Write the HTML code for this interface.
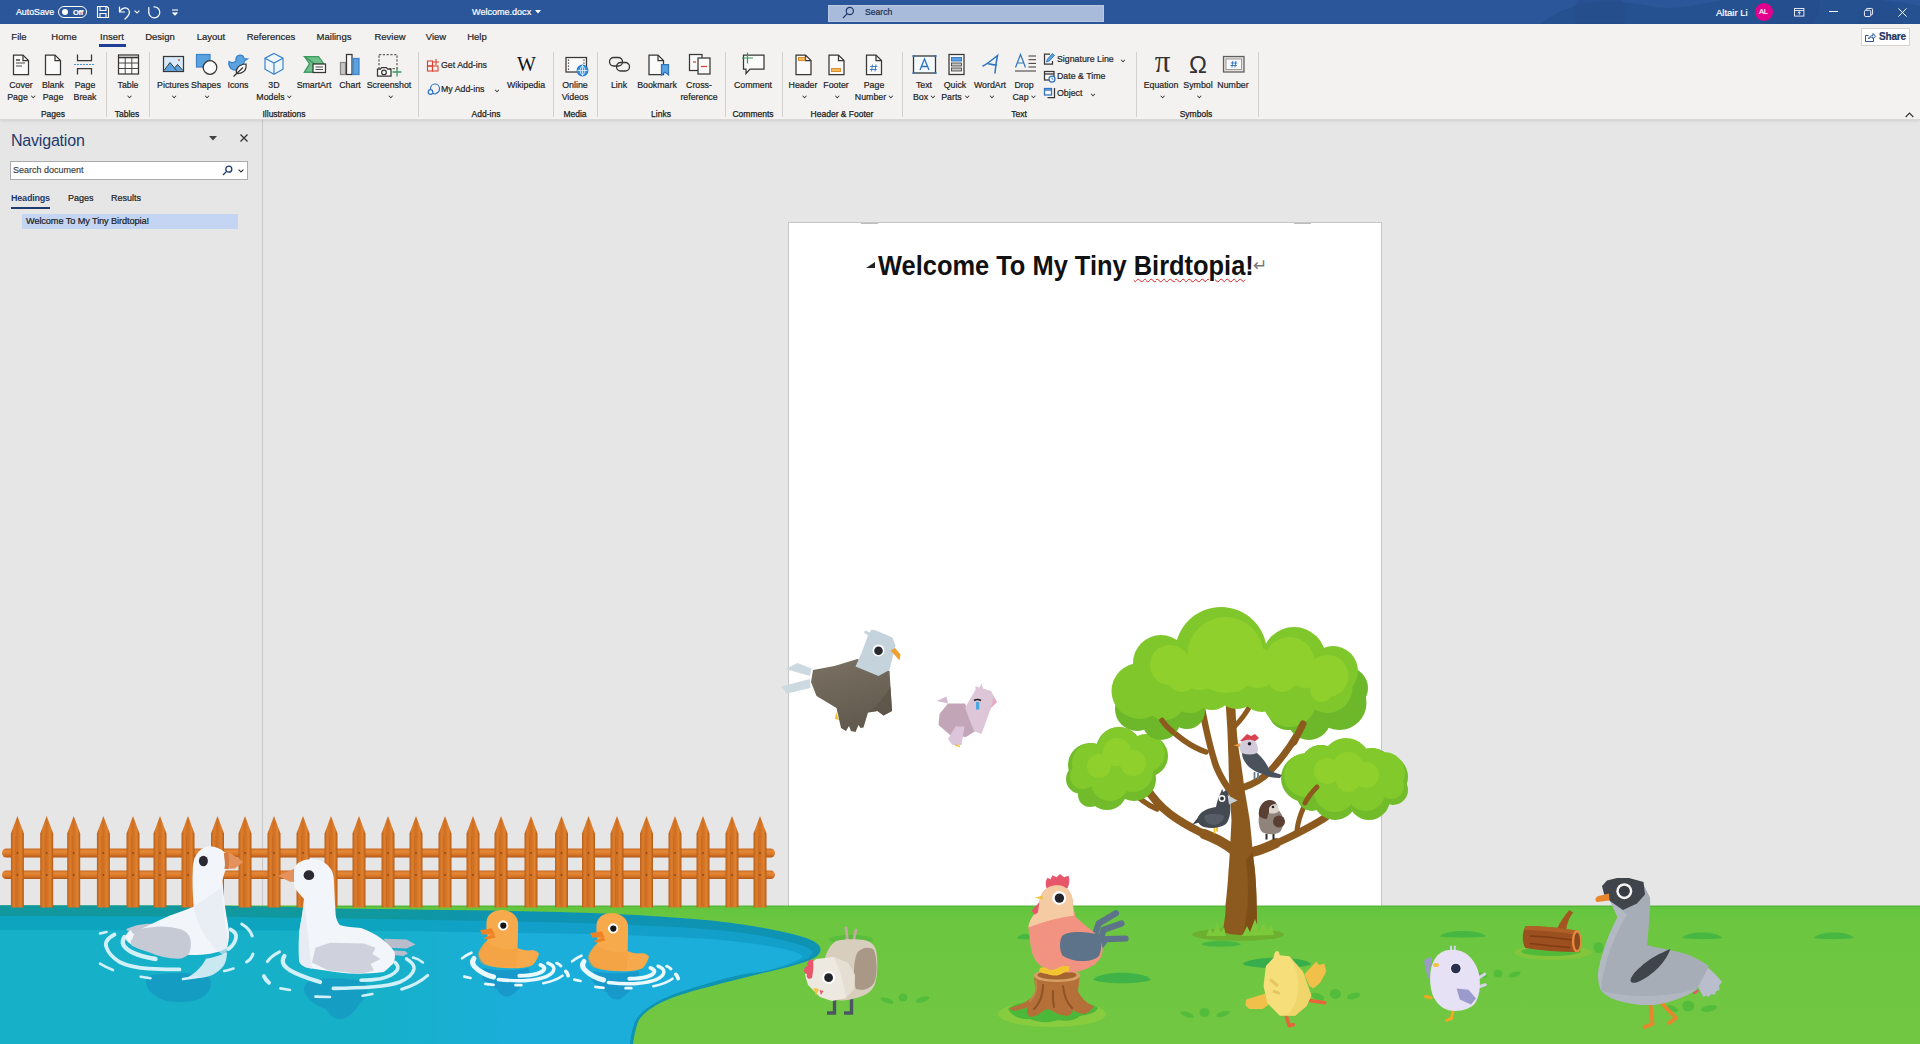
<!DOCTYPE html>
<html lang="en">
<head>
<meta charset="utf-8">
<title>Welcome.docx - Word</title>
<style>
*{margin:0;padding:0;box-sizing:border-box}
html,body{width:1920px;height:1044px;overflow:hidden;background:#e6e6e6}
body{font-family:"Liberation Sans",sans-serif;font-size:11px;color:#262626;position:relative}
#app{position:absolute;left:0;top:0;width:1920px;height:1044px;overflow:hidden;background:#e6e6e6}
.abs{position:absolute}
#titlebar{position:absolute;left:0;top:0;width:1920px;height:24px;background:#2b579a;color:#fff}
#titlebar .t{position:absolute;top:6px;font-size:11px;line-height:13px;color:#fff;white-space:nowrap;-webkit-text-stroke:.2px currentColor}
#ribbon{position:absolute;left:0;top:24px;width:1920px;height:96px;background:#f3f2f1;border-bottom:1px solid #dad8d6;box-shadow:0 1px 3px rgba(0,0,0,.10);z-index:2}
.tab{position:absolute;top:6px;font-size:9.5px;line-height:14px;color:#1f1f1f;-webkit-text-stroke:.2px #1f1f1f;white-space:nowrap;transform:translateX(-50%)}
.rb{position:absolute;top:55px;font-size:8.8px;line-height:12.3px;color:#1f1f1f;-webkit-text-stroke:.2px #1f1f1f;text-align:center;white-space:nowrap;transform:translateX(-50%)}
.gl{position:absolute;top:84px;font-size:8.5px;line-height:12px;color:#222;-webkit-text-stroke:.25px #222;white-space:nowrap;transform:translateX(-50%)}
.sep{position:absolute;top:28px;width:1px;height:65px;background:#d2d0ce}
.sm{position:absolute;font-size:8.8px;line-height:13px;color:#1f1f1f;-webkit-text-stroke:.2px #1f1f1f;white-space:nowrap}
.ic{position:absolute;overflow:visible}
.chev{display:inline-block;width:4px;height:4px;border-right:1.3px solid #2b2b2b;border-bottom:1.3px solid #2b2b2b;transform:rotate(45deg) scale(.8);position:relative;top:-2px;margin-left:3px}
#nav{position:absolute;left:0;top:120px;width:262.500px;height:923px;background:#e6e6e6;border-right:1px solid #c8c8c8}
#page{position:absolute;left:788px;top:222px;width:594px;height:822px;background:#fff;border:1px solid #c6c6c6;border-bottom:none}
</style>
</head>
<body>
<div id="app">
<div id="titlebar">
  <svg class="ic" style="left:1540px;top:0" width="380" height="24" viewBox="0 0 380 24">
    <path d="M0 24 C30 2 60 -4 110 6 C150 14 175 -6 230 -2 C290 2 330 -6 380 6 L380 24Z" fill="#264f8e" opacity=".75"/>
    <circle cx="60" cy="14" r="26" fill="#244b88" opacity=".45"/>
    <circle cx="250" cy="4" r="30" fill="#244b88" opacity=".4"/>
    <circle cx="340" cy="22" r="22" fill="#244b88" opacity=".4"/>
  </svg>
  <span class="t" style="left:16px;font-size:8.8px;">AutoSave</span>
  <div class="abs" style="left:58px;top:6px;width:29px;height:12px;border:1.3px solid #fff;border-radius:7px"></div>
  <div class="abs" style="left:62px;top:9px;width:6px;height:6px;border-radius:50%;background:#fff"></div>
  <span class="t" style="left:73px;top:6.500px;font-size:7.5px;font-weight:bold;line-height:11px;letter-spacing:-.3px">Off</span>
  <!-- save -->
  <svg class="ic" style="left:96px;top:5px" width="14" height="14" viewBox="0 0 14 14" fill="none" stroke="#fff" stroke-width="1.1">
    <path d="M1.5 1.5h9.5l1.5 1.5v9.500h-11z"/><path d="M4 1.500v4h6v-4"/><path d="M4 12.500v-4h6v4"/>
  </svg>
  <!-- undo -->
  <svg class="ic" style="left:117px;top:4px" width="16" height="16" viewBox="0 0 16 16" fill="none" stroke="#fff" stroke-width="1.2" stroke-linecap="round" stroke-linejoin="round">
    <path d="M2.500 3v5h5"/><path d="M2.800 7.600C4.500 4 9 2.500 11.500 5.500c2 2.600.5 6-3.500 9.500"/>
  </svg>
  <svg class="ic" style="left:134px;top:10px" width="6" height="4" viewBox="0 0 6 4" fill="none" stroke="#fff" stroke-width="1.1"><path d="M.6.600l2.400 2.400l2.400-2.400"/></svg>
  <!-- redo -->
  <svg class="ic" style="left:146px;top:4px" width="16" height="16" viewBox="0 0 16 16" fill="none" stroke="#fff" stroke-width="1.2" stroke-linecap="round" stroke-linejoin="round">
    <path d="M2.800 3.500v5"/><path d="M2.800 8.500A5.500 5.500 0 1 0 8 2.800"/>
  </svg>
  <svg class="ic" style="left:171px;top:9px" width="8" height="7" viewBox="0 0 8 7" fill="none" stroke="#fff" stroke-width="1.1"><path d="M1 1h6"/><path d="M1.600 3.500l2.400 2.400l2.400-2.400" fill="#fff"/></svg>
  <span class="t" style="left:472px;font-size:9.05px">Welcome.docx</span>
  <svg class="ic" style="left:535px;top:10px" width="6" height="4" viewBox="0 0 6 4"><path d="M0 0h6l-3 3.500z" fill="#fff"/></svg>
  <div class="abs" style="left:828px;top:4.500px;width:276px;height:17px;background:#a8bbda;border:1px solid #b9c8e2"></div>
  <svg class="ic" style="left:842px;top:6px" width="13" height="13" viewBox="0 0 13 13" fill="none" stroke="#1f3a68" stroke-width="1.2"><circle cx="7.800" cy="5" r="3.600"/><path d="M5.200 7.600L1 12"/></svg>
  <span class="t" style="left:865px;color:#1c2f52;font-size:8.6px">Search</span>
  <span class="t" style="left:1716px;font-size:9.5px">Altair Li</span>
  <div class="abs" style="left:1755px;top:3px;width:18px;height:18px;border-radius:50%;background:#e3008c"></div>
  <span class="t" style="left:1759px;top:7px;font-size:7.500px;line-height:10px;letter-spacing:-.2px">AL</span>
  <svg class="ic" style="left:1794px;top:8px" width="10.500" height="8.500" viewBox="0 0 12 10" fill="none" stroke="#fff" stroke-width="1"><rect x=".5" y=".5" width="11" height="9"/><path d="M.500 3h11"/><path d="M6 8V4.500M4.300 6L6 4.300L7.700 6"/></svg>
  <div class="abs" style="left:1829px;top:11px;width:9px;height:1px;background:#fff"></div>
  <svg class="ic" style="left:1863.500px;top:7.500px" width="9" height="9" viewBox="0 0 10 10" fill="none" stroke="#fff" stroke-width="1"><rect x=".5" y="2.500" width="7" height="7" rx="1.500"/><path d="M2.500 2.500v-1a1 1 0 0 1 1-1h5a1 1 0 0 1 1 1v5a1 1 0 0 1-1 1h-1"/></svg>
  <svg class="ic" style="left:1897.500px;top:7.500px" width="9" height="9" viewBox="0 0 10 10" fill="none" stroke="#fff" stroke-width="1.1"><path d="M.5.500l9 9M9.500.500l-9 9"/></svg>
</div>
<div id="ribbon">
  <span class="tab" style="left:19px">File</span>
  <span class="tab" style="left:64px">Home</span>
  <span class="tab" style="left:112px">Insert</span>
  <span class="tab" style="left:160px">Design</span>
  <span class="tab" style="left:211px">Layout</span>
  <span class="tab" style="left:271px">References</span>
  <span class="tab" style="left:334px">Mailings</span>
  <span class="tab" style="left:390px">Review</span>
  <span class="tab" style="left:436px">View</span>
  <span class="tab" style="left:477px">Help</span>
  <div class="abs" style="left:99px;top:20px;width:27px;height:2.500px;background:#1f3f94"></div>
  <span class="rb" style="left:21px">Cover<br>Page<i class="chev"></i></span>
  <span class="rb" style="left:53px">Blank<br>Page</span>
  <span class="rb" style="left:85px">Page<br>Break</span>
  <span class="rb" style="left:128px">Table<br><i class="chev"></i></span>
  <span class="rb" style="left:173px">Pictures<br><i class="chev"></i></span>
  <span class="rb" style="left:206px">Shapes<br><i class="chev"></i></span>
  <span class="rb" style="left:238px">Icons</span>
  <span class="rb" style="left:274px">3D<br>Models<i class="chev"></i></span>
  <span class="rb" style="left:314px">SmartArt</span>
  <span class="rb" style="left:350px">Chart</span>
  <span class="rb" style="left:389px">Screenshot<br><i class="chev"></i></span>
  <span class="rb" style="left:526px">Wikipedia</span>
  <span class="rb" style="left:575px">Online<br>Videos</span>
  <span class="rb" style="left:619px">Link</span>
  <span class="rb" style="left:657px">Bookmark</span>
  <span class="rb" style="left:699px">Cross-<br>reference</span>
  <span class="rb" style="left:753px">Comment</span>
  <span class="rb" style="left:803px">Header<br><i class="chev"></i></span>
  <span class="rb" style="left:836px">Footer<br><i class="chev"></i></span>
  <span class="rb" style="left:874px">Page<br>Number<i class="chev"></i></span>
  <span class="rb" style="left:924px">Text<br>Box<i class="chev"></i></span>
  <span class="rb" style="left:955px">Quick<br>Parts<i class="chev"></i></span>
  <span class="rb" style="left:990px">WordArt<br><i class="chev"></i></span>
  <span class="rb" style="left:1024px">Drop<br>Cap<i class="chev"></i></span>
  <span class="rb" style="left:1161px">Equation<br><i class="chev"></i></span>
  <span class="rb" style="left:1198px">Symbol<br><i class="chev"></i></span>
  <span class="rb" style="left:1233px">Number</span>
  <span class="gl" style="left:53px">Pages</span>
  <span class="gl" style="left:127px">Tables</span>
  <span class="gl" style="left:284px">Illustrations</span>
  <span class="gl" style="left:486px">Add-ins</span>
  <span class="gl" style="left:575px">Media</span>
  <span class="gl" style="left:661px">Links</span>
  <span class="gl" style="left:753px">Comments</span>
  <span class="gl" style="left:842px">Header &amp; Footer</span>
  <span class="gl" style="left:1019px">Text</span>
  <span class="gl" style="left:1196px">Symbols</span>
  <div class="sep" style="left:106px"></div>
  <div class="sep" style="left:149px"></div>
  <div class="sep" style="left:418px"></div>
  <div class="sep" style="left:553px"></div>
  <div class="sep" style="left:597px"></div>
  <div class="sep" style="left:725px"></div>
  <div class="sep" style="left:782px"></div>
  <div class="sep" style="left:902px"></div>
  <div class="sep" style="left:1136px"></div>
  <div class="sep" style="left:1258px"></div>
  <span class="sm" style="left:441px;top:35px">Get Add-ins</span>
  <span class="sm" style="left:441px;top:59px">My Add-ins</span>
  <span class="sm" style="left:1057px;top:29px">Signature Line</span>
  <span class="sm" style="left:1057px;top:46px">Date &amp; Time</span>
  <span class="sm" style="left:1057px;top:63px">Object</span>
  <i class="chev" style="position:absolute;left:492px;top:64px"></i>
  <i class="chev" style="position:absolute;left:1118px;top:34px"></i>
  <i class="chev" style="position:absolute;left:1088px;top:68px"></i>
  <!--ICONS-->
  <div class="abs" style="left:1861px;top:4px;width:49px;height:18px;background:#fff;border:1px solid #d6d4d2"></div>
  <svg class="ic" style="left:1865px;top:8px" width="11" height="10" viewBox="0 0 11 10" fill="none" stroke="#2b579a" stroke-width="1"><path d="M3.500 3.500h-3v6h8v-2.500"/><path d="M3.500 7C4 4.500 6 3.500 8 3.500V1.500l2.500 2.700L8 7V5.200C6 5.200 4.500 5.700 3.500 7z"/></svg>
  <span class="sm" style="left:1879px;top:6px;font-size:10px;font-weight:bold;color:#1e3a6e;letter-spacing:-.2px">Share</span>
  <svg class="ic" style="left:1905px;top:88px" width="9" height="6" viewBox="0 0 9 6" fill="none" stroke="#333" stroke-width="1.200"><path d="M.7 5l3.800-3.800L8.300 5"/></svg>
</div>
<svg class="ic" style="left:0;top:0;z-index:3" width="1920" height="121" viewBox="0 0 1920 121" fill="none" stroke-linejoin="miter">
<g stroke="#383736" stroke-width="1.25">
  <!-- cover page -->
  <path d="M13.500 55h9.500l5.500 5.500v14h-15z" fill="#fafafa"/><path d="M23 55v5.500h5.500"/>
  <path d="M16 60h4" stroke-width="1.400"/><path d="M16 63h9M16 66h6" stroke-width=".9"/>
  <!-- blank page -->
  <path d="M45.500 55h9.500l5.500 5.500v14h-15z" fill="#fafafa"/><path d="M55 55v5.500h5.500"/>
  <!-- page break -->
  <path d="M77.500 54.500v6h14v-6M77.500 74.500v-6h14v6" />
  <path d="M74 64.500h21" stroke="#4a90d6" stroke-dasharray="2 1" stroke-width="1.200"/>
  <!-- table -->
  <rect x="118.500" y="55" width="20" height="19" fill="#fafafa"/><path d="M118.500 57.500h20" stroke-width="1.600"/>
  <path d="M118.500 63h20M118.500 68.500h20M125.200 57.500v16.500M131.800 57.500v16.500" stroke-width=".9"/>
  <!-- pictures -->
  <rect x="163.500" y="56.500" width="20" height="15" fill="#d9ebfa"/>
  <path d="M164 71l6-8.500l4.500 5l3-3l5.500 6.500z" fill="#5ba3e0" stroke="none"/>
  <path d="M164 70.500l6-8l6.500 8M175 67.500l2.500-3l5.500 6" stroke-width="1"/>
  <circle cx="179" cy="60" r="1.100" fill="#c8683c" stroke="none"/>
  <!-- shapes -->
  <rect x="196.500" y="54.500" width="13.500" height="12.500" fill="#5ba3e0" stroke="#3c83c8"/>
  <circle cx="210" cy="67.500" r="6.800" fill="#fafafa"/>
  <!-- icons (duck + leaf) -->
  <path d="M229 61.500c2.500 1.500 5 1.500 7-.5c-.5-3 1-6 4-6c2.500 0 3.800 1.500 4 3.500l3.500.5l-3 2c-.5 3-2 5-4.500 6.500c-2 3-6.500 3.500-9 1c-1.800-2-2.500-4.500-2-7z" fill="#5ba3e0" stroke="#3c83c8"/>
  <path d="M236.500 73.500c-1-5 2-9 9.500-9.500c.8 6-2.500 10-9.500 9.500z" fill="#fafafa"/><path d="M233.500 76.500l9.500-9"/>
  <!-- 3D -->
  <path d="M274 53.500l9 4.700v11l-9 5l-9-5v-11z" fill="#eef6fd" stroke="#3c83c8" stroke-width="1.200"/>
  <path d="M265 58.200l9 4.800l9-4.800M274 63v11" stroke="#3c83c8" stroke-width="1.200"/>
  <!-- smartart -->
  <path d="M304.500 56.500h14l5.500 7.500h-9.500zM304.500 72l5-8h5v8z" fill="#6cc08a" stroke="#3d9a5f"/>
  <path d="M304.500 56.500l5 7.500l-5 8h10l-0-8z" fill="#6cc08a" stroke="#3d9a5f"/>
  <rect x="313" y="64" width="12.500" height="8.500" fill="#fafafa"/><path d="M315.500 67h7.500M315.500 69.500h7.500" stroke-width=".9"/>
  <!-- chart -->
  <rect x="340.500" y="62.500" width="5" height="12" fill="#c8c6c4" stroke="#8a8886"/>
  <rect x="346.500" y="54.500" width="5.500" height="20" fill="#fafafa"/>
  <rect x="353" y="58.500" width="6" height="16" fill="#5ba3e0" stroke="#3c83c8"/>
  <!-- screenshot -->
  <rect x="379" y="54.500" width="18" height="14" stroke-dasharray="2.200 1.600" stroke="#605e5c"/>
  <path d="M377.500 69h3l1-1.500h5l1 1.500h3.500v7h-13.500z" fill="#fafafa"/><circle cx="384" cy="72.400" r="2.300"/>
  <path d="M397 67.500v9M392.500 72h9" stroke="#3d9a5f" stroke-width="1.300"/>
  <!-- get add-ins -->
  <g stroke="#d8432e" stroke-width="1.100"><rect x="427.500" y="61" width="5" height="5"/><rect x="427.500" y="66" width="5" height="5"/><rect x="432.500" y="66" width="5.500" height="5"/><path d="M436 59v6M433 62h6"/></g>
  <!-- my add-ins -->
  <g stroke="#2f74c0" stroke-width="1.200"><path d="M430.500 89c0-3 2-5 4.500-5s4.500 2 4.500 4.500s-1.500 4.500-4 5" /><circle cx="430.500" cy="92" r="2.300"/><path d="M433 93.700l3 .300"/></g>
  <!-- online video -->
  <rect x="566" y="57.500" width="20.500" height="14.500" fill="#fafafa"/>
  <path d="M568.500 59.500v11M584 59.500v6" stroke-dasharray="1.200 1.800" stroke-width="1.200"/>
  <circle cx="582.500" cy="70.500" r="5.300" fill="#3a96dd" stroke="#2b7cd3"/>
  <path d="M577.500 70.500h10M582.500 65.500v10M582.500 65.500c-3 3-3 7 0 10M582.500 65.500c3 3 3 7 0 10" stroke="#fff" stroke-width=".7"/>
  <!-- link -->
  <g stroke-width="1.300"><rect x="609.500" y="57.500" width="13" height="8.500" rx="4.250"/><rect x="616.500" y="62.500" width="13" height="8.500" rx="4.250"/></g>
  <!-- bookmark -->
  <path d="M649 55h9l5.500 5.500v14h-14.500z" fill="#fafafa"/><path d="M658 55v5.500h5.500"/>
  <path d="M661.500 64.500h7v10.500l-3.500-3l-3.500 3z" fill="#5ba3e0" stroke="#2f74c0"/>
  <!-- cross ref -->
  <rect x="689.500" y="54.500" width="12.500" height="16" fill="#fafafa"/><path d="M693 62h3" stroke="#d8432e"/>
  <rect x="698" y="58" width="12" height="16" fill="#fafafa"/><path d="M701 66.500h6" stroke="#d8432e"/>
  <!-- comment -->
  <path d="M743.500 55h20.500v14h-14l-4 4.500v-4.500h-2.500z" fill="#fafafa"/>
  <path d="M747.500 52.500v11M742 58h11" stroke="#3d9a5f" stroke-width="1.200"/>
  <!-- header -->
  <path d="M796 55h9.500l5.500 5.500v14h-15z" fill="#fafafa"/><path d="M805.500 55v5.500h5.500"/>
  <rect x="798.500" y="57.500" width="6.500" height="3" fill="#f5b85c" stroke="#d98b1f" stroke-width=".9"/>
  <!-- footer -->
  <path d="M829 55h9.500l5.500 5.500v14h-15z" fill="#fafafa"/><path d="M838.500 55v5.500h5.500"/>
  <rect x="831.500" y="68.500" width="9" height="3" fill="#f5b85c" stroke="#d98b1f" stroke-width=".9"/>
  <!-- page number -->
  <path d="M866.500 55h9.500l5.500 5.500v14h-15z" fill="#fafafa"/><path d="M876 55v5.500h5.500"/>
  <path d="M872.500 64.500l-1 7M876 64.500l-1 7M870.300 66.500h7M869.800 69.500h7" stroke="#2f74c0" stroke-width=".9"/>
  <!-- text box -->
  <rect x="913.500" y="56" width="22" height="17" fill="#f4f9fe" stroke-width="1.300"/>
  <path d="M920 70l4.500-11l4.500 11M921.500 66.500h6" stroke="#2f74c0" stroke-width="1.300"/>
  <g fill="#2f74c0" stroke="none"><rect x="912.500" y="55" width="2" height="2"/><rect x="934.500" y="55" width="2" height="2"/><rect x="912.500" y="72" width="2" height="2"/><rect x="934.500" y="72" width="2" height="2"/></g>
  <!-- quick parts -->
  <rect x="949" y="54.500" width="15" height="20" fill="#fafafa"/>
  <rect x="951.500" y="57.500" width="10" height="3.500" fill="#5ba3e0" stroke="#2f74c0" stroke-width=".9"/>
  <rect x="951.500" y="63" width="10" height="3" fill="#c8c6c4" stroke-width=".8"/><rect x="951.500" y="68" width="10" height="3" fill="#c8c6c4" stroke-width=".8"/>
  <!-- wordart -->
  <path d="M983 66c4-2 9-6 14.500-10.500c-1 5-2 11-2.500 17.500M987.500 63.500c3 .8 6 1.500 9 1.500" stroke="#2f74c0" stroke-width="1.500" stroke-linecap="round"/>
  <!-- drop cap -->
  <path d="M1015.500 67.500l5-13l5 13M1017.300 63h6.500" stroke="#2f74c0" stroke-width="1.200"/>
  <path d="M1028.500 56h7.500M1028.500 59.700h7.500M1028.500 63.400h7.500M1028.500 67h7.500M1015 71h21" stroke-width="1"/>
  <!-- signature -->
  <path d="M1050 54h-5.500v10h8v-3" /><path d="M1046.500 62l1-3l5-5.500l2 1.800l-5 5.500z" fill="#5ba3e0" stroke="#2f74c0" stroke-width=".9"/>
  <!-- date time -->
  <rect x="1044.500" y="71.500" width="9.500" height="8.500" fill="#fafafa"/><path d="M1044.500 74h9.500" stroke-width="1.300"/>
  <circle cx="1052" cy="79" r="3" fill="#fafafa" stroke="#2f74c0"/><path d="M1052 77.500v1.700h1.300" stroke="#2f74c0" stroke-width=".8"/>
  <!-- object -->
  <path d="M1047.500 97.500h7v-9.500" /><rect x="1044.500" y="88.500" width="7" height="6.500" fill="#fafafa" stroke="#2f74c0"/><path d="M1044.500 90h7" stroke="#2f74c0" stroke-width="1.400"/>
  <!-- number -->
  <rect x="1223.500" y="56.500" width="20.500" height="15.500" fill="#e1dfdd" stroke="#605e5c"/><rect x="1226" y="59" width="15.500" height="10.500" fill="#fafafa" stroke="#8a8886" stroke-width=".8"/>
  <path d="M1232.800 61l-.8 6.500M1235.800 61l-.8 6.500M1230.800 63h6.500M1230.400 65.500h6.500" stroke="#2f74c0" stroke-width=".9"/>
</g>
<text x="526.500" y="70.500" font-family="Liberation Serif,serif" font-size="20" fill="#111" text-anchor="middle">W</text>
<text x="1162.500" y="72" font-family="Liberation Serif,DejaVu Serif,serif" font-size="31" fill="#333" text-anchor="middle">π</text>
<text x="1198" y="72.500" font-family="Liberation Sans,sans-serif" font-size="24" fill="#333" text-anchor="middle">Ω</text>
</svg>
<div id="nav"><div style="position:absolute;left:0;top:1px;width:261px;height:100px">
  <span class="abs" style="left:11px;top:10px;font-size:16px;line-height:20px;color:#1e3a6e;letter-spacing:-.2px">Navigation</span>
  <svg class="ic" style="left:209px;top:15px" width="8" height="5" viewBox="0 0 8 5"><path d="M0 0h8l-4 4.500z" fill="#444"/></svg>
  <svg class="ic" style="left:240px;top:13px" width="8" height="8" viewBox="0 0 8 8" fill="none" stroke="#333" stroke-width="1.300"><path d="M.500.500l7 7M7.500.500l-7 7"/></svg>
  <div class="abs" style="left:10px;top:40px;width:238px;height:19px;background:#fff;border:1px solid #ababab"></div>
  <span class="abs" style="left:13px;top:44px;font-size:9px;line-height:11px;color:#3a3a3a;-webkit-text-stroke:.15px #3a3a3a">Search document</span>
  <svg class="ic" style="left:222px;top:44px" width="11" height="11" viewBox="0 0 11 11" fill="none" stroke="#1e3a6e" stroke-width="1.300"><circle cx="6.800" cy="4.200" r="3"/><path d="M4.600 6.400L1 10"/></svg>
  <svg class="ic" style="left:238px;top:48px" width="6" height="4" viewBox="0 0 6 4" fill="none" stroke="#333" stroke-width="1.100"><path d="M.600.600l2.400 2.400l2.400-2.400"/></svg>
  <span class="abs" style="left:11px;top:71px;font-size:9px;line-height:12px;font-weight:bold;color:#1e3a6e;letter-spacing:-.2px">Headings</span>
  <div class="abs" style="left:11px;top:86px;width:39px;height:2px;background:#1e3a6e"></div>
  <span class="abs" style="left:68px;top:71px;font-size:9px;line-height:12px;color:#222;-webkit-text-stroke:.2px #222">Pages</span>
  <span class="abs" style="left:111px;top:71px;font-size:9px;line-height:12px;color:#222;-webkit-text-stroke:.2px #222">Results</span>
  <div class="abs" style="left:22px;top:93px;width:216px;height:15px;background:#c3d5f3"></div>
  <span class="abs" style="left:26px;top:95px;font-size:9.2px;line-height:11px;color:#1a1a1a;-webkit-text-stroke:.2px #1a1a1a;letter-spacing:-.1px">Welcome To My Tiny Birdtopia!</span>
</div></div>
<div id="page">
  <div class="abs" style="left:72px;top:0;width:17px;height:1px;background:#bdbdbd"></div>
  <div class="abs" style="left:505px;top:0;width:17px;height:1px;background:#bdbdbd"></div>
  <svg class="ic" style="left:77px;top:38px" width="10" height="8" viewBox="0 0 10 8"><path d="M0 7L9 7L9 1Z" fill="#222"/></svg>
  <h1 id="h1" class="abs" style="left:89px;top:25px;font-size:28px;line-height:36px;font-weight:bold;color:#111;white-space:nowrap;transform-origin:0 50%;transform:scaleX(.908)">Welcome To My Tiny <span style="text-decoration:underline wavy #d22;text-decoration-thickness:1px;text-underline-offset:3px">Birdtopia</span>!</h1>
  <span class="abs" style="left:464px;top:33px;font-size:17px;line-height:18px;color:#777;font-family:'DejaVu Sans',sans-serif">↵</span>
</div>
<svg class="ic" id="scene" style="left:0;top:0" width="1920" height="1044" viewBox="0 0 1920 1044">
<defs>
<linearGradient id="gG" x1="0" y1="0" x2="0" y2="1"><stop offset="0" stop-color="#62c53e"/><stop offset=".12" stop-color="#6cc640"/><stop offset="1" stop-color="#72c742"/></linearGradient>
<linearGradient id="gP" x1="0" y1="0" x2="1" y2="0"><stop offset="0" stop-color="#b9601c"/><stop offset=".22" stop-color="#dc7d2c"/><stop offset=".5" stop-color="#d06f22"/><stop offset=".78" stop-color="#df822f"/><stop offset="1" stop-color="#b55a18"/></linearGradient>
<linearGradient id="gR" x1="0" y1="0" x2="0" y2="1"><stop offset="0" stop-color="#c96a22"/><stop offset=".3" stop-color="#e58a38"/><stop offset=".7" stop-color="#d67426"/><stop offset="1" stop-color="#b05616"/></linearGradient>
<linearGradient id="gW" gradientUnits="userSpaceOnUse" x1="380" y1="0" x2="520" y2="0"><stop offset="0" stop-color="#16b0c9"/><stop offset="1" stop-color="#1baeda"/></linearGradient>
<linearGradient id="gW2" gradientUnits="userSpaceOnUse" x1="380" y1="0" x2="520" y2="0"><stop offset="0" stop-color="#0ca4bf"/><stop offset="1" stop-color="#12a0cb"/></linearGradient>
<linearGradient id="gW3" gradientUnits="userSpaceOnUse" x1="380" y1="0" x2="520" y2="0"><stop offset="0" stop-color="#10989e"/><stop offset="1" stop-color="#0e93b3"/></linearGradient>
</defs>
<rect x="0" y="906" width="1920" height="138" fill="url(#gG)"/>
<rect x="0" y="905.500" width="1920" height="1.500" fill="#58b738"/>
<path d="M0 905.300 L190 905.600 C260 906.200 300 907 337 908.500 C420 909.500 500 910.500 560 912 C630 914 680 917.500 716 921 C745 924.500 765 928 779 931 C795 934.500 807 937.500 813 941 C818.500 944 820.500 946.500 820.500 949.500 C820.500 953.500 817 957 810 960 C797 965.500 778 969.500 763 973 C745 977.500 730 981 716 985 C704 988 694 990.500 685 993.500 C672 997.500 662 1001.500 654 1006.500 C645 1012 640 1017 638 1022 C635.500 1029 634 1037 633 1044 L0 1044 Z" fill="url(#gW3)"/>
<path d="M0 916 L190 916.500 C300 917.500 420 919.500 560 922.500 C630 924.500 680 927 716 930 C745 933 765 936 779 939.500 C793 942.500 802 945 806.500 947.500 C811 949.500 812.500 951 812.500 952.500 C812.500 955 809.500 957.500 804 960 C792 964.500 778 968.500 763 972 C745 973 730 977 716 981 C700 985.500 690 988.500 680 992 C668 996 658 1000.500 650 1006 C641 1012 636 1018 634 1024 C631.500 1031 630.500 1038 630 1044 L0 1044 Z" fill="url(#gW2)"/>
<path d="M0 930 L190 930 C300 930.500 420 931 560 933.500 C630 935 680 937 716 939.500 C745 942.500 765 945 779 948 C789 950 795 951.500 799 953.500 C803 955.500 803.500 957 800 959 C790 964 776 968 763 971.500 C745 973 730 977 716 981 C700 985.500 690 988.500 680 992 C668 996 658 1000.500 650 1006 C641 1012 636 1018 634 1024 C631.500 1031 630.500 1038 630 1044 L0 1044 Z" fill="url(#gW)"/>
<g id="fence">
<rect x="2" y="848.500" width="773" height="9" rx="4.500" fill="url(#gR)"/>
<rect x="2" y="870.500" width="773" height="8.500" rx="4.250" fill="url(#gR)"/>
<path d="M10.9 907.500V833.500L17.4 816L23.9 833.500V907.500Z" fill="url(#gP)"/>
<path d="M15.9 836V906" stroke="#b96020" stroke-width=".8" opacity=".55"/>
<circle cx="17.4" cy="853" r=".9" fill="#8a4412"/><circle cx="17.4" cy="875" r=".9" fill="#8a4412"/>
<path d="M40.2 907.500V833.500L46.7 816L53.2 833.500V907.500Z" fill="url(#gP)"/>
<path d="M45.2 836V906" stroke="#b96020" stroke-width=".8" opacity=".55"/>
<circle cx="46.7" cy="853" r=".9" fill="#8a4412"/><circle cx="46.7" cy="875" r=".9" fill="#8a4412"/>
<path d="M67.2 907.500V833.500L73.7 816L80.2 833.500V907.500Z" fill="url(#gP)"/>
<path d="M72.2 836V906" stroke="#b96020" stroke-width=".8" opacity=".55"/>
<circle cx="73.7" cy="853" r=".9" fill="#8a4412"/><circle cx="73.7" cy="875" r=".9" fill="#8a4412"/>
<path d="M96.9 907.500V833.500L103.4 816L109.9 833.500V907.500Z" fill="url(#gP)"/>
<path d="M101.9 836V906" stroke="#b96020" stroke-width=".8" opacity=".55"/>
<circle cx="103.4" cy="853" r=".9" fill="#8a4412"/><circle cx="103.4" cy="875" r=".9" fill="#8a4412"/>
<path d="M126.5 907.500V833.500L133.0 816L139.5 833.500V907.500Z" fill="url(#gP)"/>
<path d="M131.5 836V906" stroke="#b96020" stroke-width=".8" opacity=".55"/>
<circle cx="133.0" cy="853" r=".9" fill="#8a4412"/><circle cx="133.0" cy="875" r=".9" fill="#8a4412"/>
<path d="M153.5 907.500V833.500L160.0 816L166.5 833.500V907.500Z" fill="url(#gP)"/>
<path d="M158.5 836V906" stroke="#b96020" stroke-width=".8" opacity=".55"/>
<circle cx="160.0" cy="853" r=".9" fill="#8a4412"/><circle cx="160.0" cy="875" r=".9" fill="#8a4412"/>
<path d="M181.5 907.500V833.500L188.0 816L194.5 833.500V907.500Z" fill="url(#gP)"/>
<path d="M186.5 836V906" stroke="#b96020" stroke-width=".8" opacity=".55"/>
<circle cx="188.0" cy="853" r=".9" fill="#8a4412"/><circle cx="188.0" cy="875" r=".9" fill="#8a4412"/>
<path d="M211.0 907.500V833.500L217.5 816L224.0 833.500V907.500Z" fill="url(#gP)"/>
<path d="M216.0 836V906" stroke="#b96020" stroke-width=".8" opacity=".55"/>
<circle cx="217.5" cy="853" r=".9" fill="#8a4412"/><circle cx="217.5" cy="875" r=".9" fill="#8a4412"/>
<path d="M238.5 907.500V833.500L245.0 816L251.5 833.500V907.500Z" fill="url(#gP)"/>
<path d="M243.5 836V906" stroke="#b96020" stroke-width=".8" opacity=".55"/>
<circle cx="245.0" cy="853" r=".9" fill="#8a4412"/><circle cx="245.0" cy="875" r=".9" fill="#8a4412"/>
<path d="M267.5 907.500V833.500L274.0 816L280.5 833.500V907.500Z" fill="url(#gP)"/>
<path d="M272.5 836V906" stroke="#b96020" stroke-width=".8" opacity=".55"/>
<circle cx="274.0" cy="853" r=".9" fill="#8a4412"/><circle cx="274.0" cy="875" r=".9" fill="#8a4412"/>
<path d="M296.5 907.500V833.500L303.0 816L309.5 833.500V907.500Z" fill="url(#gP)"/>
<path d="M301.5 836V906" stroke="#b96020" stroke-width=".8" opacity=".55"/>
<circle cx="303.0" cy="853" r=".9" fill="#8a4412"/><circle cx="303.0" cy="875" r=".9" fill="#8a4412"/>
<path d="M324.5 907.500V833.500L331.0 816L337.5 833.500V907.500Z" fill="url(#gP)"/>
<path d="M329.5 836V906" stroke="#b96020" stroke-width=".8" opacity=".55"/>
<circle cx="331.0" cy="853" r=".9" fill="#8a4412"/><circle cx="331.0" cy="875" r=".9" fill="#8a4412"/>
<path d="M352.5 907.500V833.500L359.0 816L365.5 833.500V907.500Z" fill="url(#gP)"/>
<path d="M357.5 836V906" stroke="#b96020" stroke-width=".8" opacity=".55"/>
<circle cx="359.0" cy="853" r=".9" fill="#8a4412"/><circle cx="359.0" cy="875" r=".9" fill="#8a4412"/>
<path d="M381.5 907.500V833.500L388.0 816L394.5 833.500V907.500Z" fill="url(#gP)"/>
<path d="M386.5 836V906" stroke="#b96020" stroke-width=".8" opacity=".55"/>
<circle cx="388.0" cy="853" r=".9" fill="#8a4412"/><circle cx="388.0" cy="875" r=".9" fill="#8a4412"/>
<path d="M409.5 907.500V833.500L416.0 816L422.5 833.500V907.500Z" fill="url(#gP)"/>
<path d="M414.5 836V906" stroke="#b96020" stroke-width=".8" opacity=".55"/>
<circle cx="416.0" cy="853" r=".9" fill="#8a4412"/><circle cx="416.0" cy="875" r=".9" fill="#8a4412"/>
<path d="M438.5 907.500V833.500L445.0 816L451.5 833.500V907.500Z" fill="url(#gP)"/>
<path d="M443.5 836V906" stroke="#b96020" stroke-width=".8" opacity=".55"/>
<circle cx="445.0" cy="853" r=".9" fill="#8a4412"/><circle cx="445.0" cy="875" r=".9" fill="#8a4412"/>
<path d="M466.5 907.500V833.500L473.0 816L479.5 833.500V907.500Z" fill="url(#gP)"/>
<path d="M471.5 836V906" stroke="#b96020" stroke-width=".8" opacity=".55"/>
<circle cx="473.0" cy="853" r=".9" fill="#8a4412"/><circle cx="473.0" cy="875" r=".9" fill="#8a4412"/>
<path d="M494.5 907.500V833.500L501.0 816L507.5 833.500V907.500Z" fill="url(#gP)"/>
<path d="M499.5 836V906" stroke="#b96020" stroke-width=".8" opacity=".55"/>
<circle cx="501.0" cy="853" r=".9" fill="#8a4412"/><circle cx="501.0" cy="875" r=".9" fill="#8a4412"/>
<path d="M524.5 907.500V833.500L531.0 816L537.5 833.500V907.500Z" fill="url(#gP)"/>
<path d="M529.5 836V906" stroke="#b96020" stroke-width=".8" opacity=".55"/>
<circle cx="531.0" cy="853" r=".9" fill="#8a4412"/><circle cx="531.0" cy="875" r=".9" fill="#8a4412"/>
<path d="M555.0 907.500V833.500L561.5 816L568.0 833.500V907.500Z" fill="url(#gP)"/>
<path d="M560.0 836V906" stroke="#b96020" stroke-width=".8" opacity=".55"/>
<circle cx="561.5" cy="853" r=".9" fill="#8a4412"/><circle cx="561.5" cy="875" r=".9" fill="#8a4412"/>
<path d="M582.0 907.500V833.500L588.5 816L595.0 833.500V907.500Z" fill="url(#gP)"/>
<path d="M587.0 836V906" stroke="#b96020" stroke-width=".8" opacity=".55"/>
<circle cx="588.5" cy="853" r=".9" fill="#8a4412"/><circle cx="588.5" cy="875" r=".9" fill="#8a4412"/>
<path d="M610.5 907.500V833.500L617.0 816L623.5 833.500V907.500Z" fill="url(#gP)"/>
<path d="M615.5 836V906" stroke="#b96020" stroke-width=".8" opacity=".55"/>
<circle cx="617.0" cy="853" r=".9" fill="#8a4412"/><circle cx="617.0" cy="875" r=".9" fill="#8a4412"/>
<path d="M640.0 907.500V833.500L646.5 816L653.0 833.500V907.500Z" fill="url(#gP)"/>
<path d="M645.0 836V906" stroke="#b96020" stroke-width=".8" opacity=".55"/>
<circle cx="646.5" cy="853" r=".9" fill="#8a4412"/><circle cx="646.5" cy="875" r=".9" fill="#8a4412"/>
<path d="M668.5 907.500V833.500L675.0 816L681.5 833.500V907.500Z" fill="url(#gP)"/>
<path d="M673.5 836V906" stroke="#b96020" stroke-width=".8" opacity=".55"/>
<circle cx="675.0" cy="853" r=".9" fill="#8a4412"/><circle cx="675.0" cy="875" r=".9" fill="#8a4412"/>
<path d="M696.5 907.500V833.500L703.0 816L709.5 833.500V907.500Z" fill="url(#gP)"/>
<path d="M701.5 836V906" stroke="#b96020" stroke-width=".8" opacity=".55"/>
<circle cx="703.0" cy="853" r=".9" fill="#8a4412"/><circle cx="703.0" cy="875" r=".9" fill="#8a4412"/>
<path d="M725.5 907.500V833.500L732.0 816L738.5 833.500V907.500Z" fill="url(#gP)"/>
<path d="M730.5 836V906" stroke="#b96020" stroke-width=".8" opacity=".55"/>
<circle cx="732.0" cy="853" r=".9" fill="#8a4412"/><circle cx="732.0" cy="875" r=".9" fill="#8a4412"/>
<path d="M753.5 907.500V833.500L760.0 816L766.5 833.500V907.500Z" fill="url(#gP)"/>
<path d="M758.5 836V906" stroke="#b96020" stroke-width=".8" opacity=".55"/>
<circle cx="760.0" cy="853" r=".9" fill="#8a4412"/><circle cx="760.0" cy="875" r=".9" fill="#8a4412"/>
</g>
<g id="patches" fill="#47b743">
  <path d="M1093 979.500c8-9 50-9 58 0c-8 5-50 5-58 0z" fill="#3fb347"/>
  <path d="M1242.500 964c8-8.500 61-8.500 69 0c-8 5.500-61 5.500-69 0z" fill="#37ad4b"/>
  <path d="M1201 944.500c6-5 34-5 40 0c-6 3-34 3-40 0z"/>
  <path d="M1440 936.500c4-7.500 42-7.500 46 0c-8 1.500-38 1.500-46 0z"/>
  <path d="M1682 938c4-7.500 36-7.500 40 0c-8 1.500-32 1.500-40 0z"/>
  <path d="M1814 938c4-7.500 36-7.500 40 0c-8 1.500-32 1.500-40 0z"/>
  <path d="M1017 938.500c2-6 14-6 16 0c-4 1-12 1-16 0z"/>
  <ellipse cx="851" cy="939.500" rx="22" ry="4.500" fill="#5abd3c"/>
</g>
<g id="prints" fill="#52bb3c" opacity=".9">
  <ellipse cx="887" cy="1000.500" rx="7" ry="2.500" transform="rotate(20 887 1000.500)"/><ellipse cx="903" cy="997.500" rx="4.500" ry="4"/><ellipse cx="922.500" cy="999.500" rx="7" ry="2.500" transform="rotate(-18 922.500 999.500)"/>
  <ellipse cx="1187" cy="1014.500" rx="7" ry="2.500" transform="rotate(20 1187 1014.500)"/><ellipse cx="1204.500" cy="1012.500" rx="5" ry="4.500"/><ellipse cx="1223" cy="1014" rx="7" ry="2.500" transform="rotate(-18 1223 1014)"/>
  <ellipse cx="1317.600" cy="996.500" rx="7" ry="3.200" transform="rotate(20 1317.600 996.500)"/><ellipse cx="1335.400" cy="994" rx="5.500" ry="5"/><ellipse cx="1353.600" cy="996" rx="7" ry="3" transform="rotate(-15 1353.600 996)"/>
  <ellipse cx="1482.500" cy="975" rx="5" ry="2.500" transform="rotate(20 1482.500 975)"/><ellipse cx="1498" cy="973.500" rx="4.500" ry="4"/><ellipse cx="1514.500" cy="974.500" rx="6.500" ry="2.500" transform="rotate(-18 1514.500 974.500)"/>
  <ellipse cx="1598.500" cy="947.500" rx="5" ry="5.500"/>
  <ellipse cx="1672.500" cy="1008.500" rx="6" ry="2.500" transform="rotate(25 1672.500 1008.500)"/><ellipse cx="1688.300" cy="1006" rx="6" ry="5.500"/><ellipse cx="1709" cy="1008.500" rx="8" ry="3" transform="rotate(-12 1709 1008.500)"/>
</g>
<g id="tree">
  <ellipse cx="1238" cy="934.500" rx="46" ry="6.500" fill="#6db030"/>
  <!-- branches -->
  <g fill="none" stroke="#8c5a1e" stroke-linecap="round" stroke-linejoin="round">
    <path d="M1234 850C1222 840 1210 836 1200 832C1188 826 1178 820 1170 814C1162 808 1152 797 1145 786" stroke-width="8"/>
    <path d="M1236 852C1224 842 1214 838 1204 834" stroke-width="10"/>
    <path d="M1157 809C1149 806 1139 799 1128 787" stroke-width="5.500"/>
    <path d="M1234 796C1226 786 1220 776 1216 766C1210 748 1205 725 1201 703" stroke-width="6.500"/>
    <path d="M1206 752C1194 748 1178 738 1162 721" stroke-width="5.500"/>
    <path d="M1242 788C1254 784 1264 778 1271 770C1282 758 1294 742 1303 724" stroke-width="7"/>
    <path d="M1250 852C1266 848 1280 842 1291 836.500C1304 830 1316 824 1326 817" stroke-width="7.500"/>
    <path d="M1248 853C1258 851 1268 847 1276 843" stroke-width="10"/>
    <path d="M1297 830C1299 815 1306 800 1317 788" stroke-width="5"/>
    <path d="M1235 726C1241 720 1246 713 1250 706" stroke-width="5"/>
  </g>
  <!-- trunk -->
  <path d="M1222.500 931.500C1225 920 1226 910 1225.500 905C1227 893 1228 880 1228.500 871C1229.500 860 1230.500 840 1231.500 820C1231 810 1230 800 1229.500 790C1229 780 1228.500 770 1228.500 760C1228 740 1227 720 1225.500 700L1235 700C1236 720 1237 735 1237.600 740C1238.500 748 1239.500 755 1240.600 760C1242 770 1243.500 780 1244.600 790C1246.500 800 1248 810 1249.700 820C1251 832 1252 842 1252.700 852C1253.500 860 1254.500 866 1255 871C1256 883 1256.500 895 1256.700 905C1257 915 1257 925 1256.700 931.500C1250 936 1230 936 1222.500 931.500Z" fill="#8c5a1e"/>
  <path d="M1246 860C1249 885 1249 910 1243 934C1248 934.500 1253 933.500 1256.700 931.500C1257 915 1257 895 1255 871C1254 862 1253 855 1252.700 852Z" fill="#7a4b16" opacity=".75"/>
  <g fill="#7cc93c"><path d="M1206 936l4-9l3 6l4-10l4 9l3-5l2 9zM1242 936l5-10l3 6l5-13l4 11l5-8l3 8l5-5l2 10z"/></g>
  <!-- left small foliage -->
  <g fill="#72bc2b"><circle cx="1119" cy="750" r="23"/><circle cx="1090" cy="765" r="22"/><circle cx="1147" cy="756" r="21"/><circle cx="1107" cy="790" r="20"/><circle cx="1134" cy="779" r="22"/><circle cx="1081" cy="779" r="15"/><circle cx="1090" cy="795" r="12"/></g>
  <g fill="#82c92b"><circle cx="1119" cy="748" r="21"/><circle cx="1092" cy="763" r="20"/><circle cx="1146" cy="753" r="19"/><circle cx="1110" cy="782" r="19"/><circle cx="1133" cy="772" r="20"/><circle cx="1083" cy="776" r="13"/></g>
  <g fill="#8fd02d"><circle cx="1117" cy="752" r="14"/><circle cx="1099" cy="766" r="12"/><circle cx="1133" cy="763" r="13"/></g>
  <!-- right small foliage -->
  <g fill="#72bc2b"><circle cx="1346" cy="765" r="26"/><circle cx="1305" cy="778" r="24"/><circle cx="1385" cy="777" r="23"/><circle cx="1335" cy="798" r="22"/><circle cx="1369" cy="799" r="21"/><circle cx="1393" cy="790" r="15"/><circle cx="1312" cy="796" r="15"/><circle cx="1321" cy="766" r="21"/><circle cx="1372" cy="768" r="20"/></g>
  <g fill="#82c92b"><circle cx="1346" cy="762" r="24"/><circle cx="1306" cy="775" r="22"/><circle cx="1384" cy="773" r="21"/><circle cx="1335" cy="791" r="21"/><circle cx="1366" cy="792" r="19"/><circle cx="1391" cy="786" r="13"/><circle cx="1321" cy="764" r="19"/><circle cx="1371" cy="766" r="18"/></g>
  <g fill="#8fd02d"><circle cx="1348" cy="768" r="16"/><circle cx="1327" cy="771" r="13"/><circle cx="1366" cy="775" r="13"/><circle cx="1348" cy="780" r="12"/></g>
  <path d="M1305 803C1308 797 1312 792 1317 787" stroke="#8c5a1e" stroke-width="5" stroke-linecap="round" fill="none"/>
  <!-- main crown -->
  <g fill="#6db72b"><circle cx="1339.500" cy="703" r="27"/><circle cx="1309" cy="718" r="22"/><circle cx="1161" cy="721" r="19"/><circle cx="1187" cy="711" r="18"/><circle cx="1137" cy="709" r="22"/><circle cx="1347" cy="688" r="21"/><circle cx="1288" cy="710" r="20"/></g>
  <g fill="#80c72b"><circle cx="1221" cy="653" r="46"/><circle cx="1161" cy="663" r="28"/><circle cx="1139.5" cy="691" r="28"/><circle cx="1190" cy="692" r="21"/><circle cx="1237" cy="686" r="23"/><circle cx="1294" cy="659" r="32"/><circle cx="1333" cy="671" r="25"/><circle cx="1289.5" cy="700" r="27"/><circle cx="1327.5" cy="688" r="25"/><circle cx="1165" cy="700" r="20"/><circle cx="1212" cy="690" r="20"/><circle cx="1262" cy="690" r="22"/><rect x="1160" y="655" width="150" height="40"/></g>
  <g fill="#8fd02d"><circle cx="1225.5" cy="655" r="38"/><circle cx="1170" cy="665" r="20"/><circle cx="1182" cy="678" r="14"/><circle cx="1234" cy="676" r="16"/><circle cx="1289.5" cy="662" r="25"/><circle cx="1282" cy="678" r="14"/><circle cx="1327.5" cy="676" r="21"/><circle cx="1321.5" cy="691" r="11"/><circle cx="1200" cy="672" r="18"/><circle cx="1258" cy="668" r="20"/><circle cx="1306" cy="672" r="16"/><rect x="1175" y="655" width="130" height="28"/></g>
  <g fill="none" stroke="#8c5a1e" stroke-linecap="round"><path d="M1294 742C1297 736 1300 730 1303 724" stroke-width="7"/><path d="M1173 732C1169 729 1165 725 1162 720.500" stroke-width="5.500"/></g>
</g>
<g id="goose1">
  <path d="M149 976c14-4 42-4 58 0c8 6 4 17-8 23c-14 5-32 4-42-2c-10-6-14-15-8-21z" fill="#1595bf" opacity=".75"/>
  <g fill="none" stroke="#d2f0f9" stroke-linecap="round">
    <path d="M124.500 937c-4 6-1 11 8 15.500c6 3 14 5 23 6.500" stroke-width="4.400"/>
    <path d="M114.500 934.500c-8 4-10 9-8 13c2 6 6 10 13 14.500c8 4 18 6 29.500 6.600c10 .8 20 .9 30.500 .8" stroke-width="3.800"/>
    <path d="M230.500 929.500c4 2 6 5 5.500 8c-.5 4-3 8-7.500 11.500" stroke-width="3.800"/>
    <path d="M241.700 924c5 3 9 7 10.500 12" stroke-width="3"/>
    <path d="M253 954c-1 3-3 6-6.500 8" stroke-width="3"/>
    <path d="M224 971c3-.5 6-1.500 9.500-2.500M183 979c5-.5 10-1.300 14.700-2.300M140.700 976.700l9.800 1.600M100 933.500l6.500-1.500M100 963.700c4 2.500 8 4.500 13 6.300" stroke-width="2.600"/>
  </g>
  <path d="M206 958.800c7-1 14-3.500 21-6.500c0 5-1 9-3 13c-3 4-7 7.500-11.500 9.700c-5 2-10 3-16.500 3.300c-4 .3-8 .7-11.300 .7c8-4 16-10 21.300-20.200z" fill="#d9edf5" opacity=".92"/>
  <path d="M126 929.500c6-3.500 16-6 26-5.700l6 8l-22 5z" fill="#c2c6d2"/>
  <path d="M133 934c6-4 12-7 19-10.200c6-2.800 12-5.500 18-8.200c8-3 16-6 23.600-8.900c-1-13-1.500-26-.8-39c.5-8 3-14 8-18c3-2.500 7-3.700 10.900-3.300c6 .5 12 4 15.800 8.600l-1.500 14c-2 5-3 9-3.500 11.500c1 12 2 24 4 36c1 5 2 10 2.500 16c.5 6-1 11-2.500 16c-10 5-22 6.500-34 6.500c-14 0-30-1-44-3.500c-8-2-16-5-21.500-10.500c-3-4-1-8 4-11z" fill="#f2f5fa"/>
  <path d="M193.600 906.700c2 12 8 26 18 38c4 5 9 9 13.800 11c1.500-5 3-10 2.500-16c-.5-6-1.500-11-2.500-16c-2-12-3-24-4-36c-8 6-18 12-27.800 19z" fill="#e4e9f2" opacity=".65"/>
  <path d="M135 931c6-2.500 12-3.700 18.700-4c9-1 19 0 27.700 2.500c5 2 8 5.500 9 9.700c1 5 .5 9-.8 13c-2 4-6 6-11.400 6.600c-10 0-20-2.500-29.300-6.500c-6-2-12-4-17-6.600c-2-3-1-5.500 1-8z" fill="#c6cad5"/>
  <path d="M223.800 853l6.500 0l13 8.900l-8.300 6.500l-10.400 .6c1-5 0-11-.8-16z" fill="#e5915c"/>
  <path d="M223.800 853l4.500 0c1 5.500 1 11 .2 16l-3.900 0c1-5 0-11-.8-16z" fill="#d27d48"/>
  <ellipse cx="203.400" cy="861" rx="4.500" ry="5.300" fill="#2b2a33"/>
</g>
<g id="goose2">
  <path d="M308 982c12-5 42-5 56 0c6 6 3 16-5 22c-3 6-8 12-16 15c-8 1-14-4-17-10c-10-3-18-9-21-16c-2-4-1-8 3-11z" fill="#1596c0" opacity=".7"/>
  <g fill="none" stroke="#d2f0f9" stroke-linecap="round">
    <path d="M284.400 956c-2 3-2 6.500 0 9.600c3 4 9 7 16.300 9.800c6 2.500 12 4.500 19.300 6.600" stroke-width="4.200"/>
    <path d="M395 962.400c3 2.500 3.500 5.500 1.800 8.100c-3 4-9 6.500-16.300 8.200c-6 1-12 1.500-19.500 1.600" stroke-width="3.600"/>
    <path d="M406.600 959c5 3 8 6.500 7.400 10c-1 5-6 9.500-14 13c-7 2.500-16 4-26 4.800c-12 1-26 1.500-40.700 1.600" stroke-width="3.600"/>
    <path d="M427.700 975.400c-6 5.500-15 10.500-26 13.900" stroke-width="3"/>
    <path d="M413 957.500c4 1 7.500 2.800 9.900 4.900M280.400 988.400l9.600 1.600M315.400 996.600l14.600 .4M362.600 995.800l9.800-1.800" stroke-width="2.600"/>
    <path d="M279.500 951.800c-5 2.500-9.500 6-12.200 9.800" stroke-width="3"/>
    <path d="M264 976.200c1 2.500 2.800 4.700 5 6.500" stroke-width="4"/>
  </g>
  <path d="M383.800 938.800l22.800 .8l8.900 4.900l-8.900 4l-18 -.8z M383.800 950l21.200 1l3 2.400l-4.700 2.500l-18-1.900z" fill="#b9bdcb"/>
  <path d="M294.200 887c-.5-6-.5-12 0-18.300c1-5 8-9 16.300-9.700c9-.3 17 4 21.500 12c1.500 4 2 8 2 11.600c.5 11 1 22 1.700 32.400c.5 4 2 7.500 4.100 10c6 2 14 2.500 21.200 3c7 2.500 14 6 19.500 10c6 4 11 9 14 14c1 4 .5 8-1.500 12c-4 3-6 6-9.200 8c-8 1-17 1.500-26 1.800c-11 -.2-22-1.200-32.600-3.300c-7-.8-14-1.800-19.600-3.200c-4-2-6-4-6.600-6.600c-.3-9-.3-18 0-26c.5-6 1.500-11 2.500-16.300c1-6 2-13 2.500-19.500c-3-3.500-7-7.500-9.800-11.900z" fill="#f2f5fa"/>
  <path d="M304 898.900c-.5 6.500-1.500 13.500-2.500 19.500c-1 5.300-2 10.300-2.500 16.300c-.3 8-.3 17 0 26c.6 2.600 2.600 4.600 6.600 6.600c2 .5 4 1 6.400 1.400c-3-20-5-45-8-69.800z" fill="#e3e8f1" opacity=".8"/>
  <path d="M315.400 947.700l14.600-4.900l34 .8l11.600 4.100l-3.200 6.300l8.100 5l-9.800 5l3.300 6.500l-13 3.300l-32.600-3.300l-16.400-8.100z" fill="#cfd2dc"/>
  <path d="M294.200 868.700l-16.200 7.300l12 5.800l4.200 0c-.5-4-.5-9 0-13.100z" fill="#e5915c"/>
  <ellipse cx="308.900" cy="875.200" rx="5.300" ry="4.900" fill="#2b2a33"/>
</g>
<g id="duck1">
  <path d="M484 968c10 3 32 3 44 0c3 4 1 9-4 12c-2 6-7 12-14 16c-6 2-11-2-13-7c-7-2-13-7-15-13c-1-3 0-6 2-8z" fill="#1892c6" opacity=".75"/>
  <g fill="none" stroke="#eaf9fd" stroke-linecap="round">
    <path d="M474 958.500c-2 2.500-2 5 0 7.500c2.500 3 6 5.500 10 7.500c3 1.500 6 2.500 9.500 3.500" stroke-width="5"/>
    <path d="M540.500 965c3 1.200 4.200 2.600 3.800 4c-.8 2-3.500 3.600-7.700 4.800c-4.500 1.200-10.500 1.800-17.200 1.900" stroke-width="4"/>
    <path d="M548 963.200c4 1.500 6 3.500 5.900 5.800c-.3 3-3 5.600-7.700 7.600c-5 2-11.500 3.200-19.200 3.900c-9 .7-18.500 .2-28.700-1" stroke-width="3.400"/>
    <path d="M562.500 975.700c-4.500 3.300-11 5.900-19.200 7.600" stroke-width="2.600"/>
    <path d="M556.700 963.200c1.800 .7 3.300 1.700 4.300 2.800" stroke-width="3"/>
    <path d="M565.800 971.400c1.300 1.200 2.100 2.700 2.400 4.300" stroke-width="3.800"/>
    <path d="M462 958.400c2.500-2.300 5.700-4.200 9.500-5.700" stroke-width="2.600"/>
    <path d="M464.300 976.600l6.200 1.400M485.400 983.800l8.100 1M515.600 985.200h5.700" stroke-width="2.800"/>
  </g>
  <path d="M478.700 953.600c1.500-4.500 4-8.500 7.500-12c1.500-1.500 2-3 1.500-5c-1-4-1.500-9-1.200-14.500c.5-7 6-12 15-12.100c9 0 15.500 5 16.500 12c.3 9-.2 17.500-.4 26c3 1.500 7 2.300 10.500 2.500c2.500-.3 4.500-.2 5.700-.2c1.800 .3 3.500 1.500 5.200 3.300c-1 4.500-3.300 8.200-6.200 11.400c-3 1.500-6 2.200-9.500 2.700c-8 .8-17 .8-25.500-.2c-6-.8-11-2.200-13.800-4c-3-2.500-5-6-5.300-9.900z" fill="#f7aa4c"/>
  <path d="M486.200 941.600c6 5 13 7.500 21 7.800c4 0 7.500-.5 10.400-1.400l-1 19c-8 .8-17 .8-25.500-.2c-5-1-8-2-10-3.500c-2-3-3-6-3.200-9.700c1.500-4.500 4-8.500 7.500-12z" fill="#f29d3d" opacity=".5"/>
  <path d="M480 930.300l11.600-2.100l3.200 6l-12.600 .2z M483.500 937.900l10-4l2 3.600l-8.700 2z" fill="#f08226"/>
  <circle cx="503.100" cy="925.400" r="5.200" fill="#fff"/><circle cx="503.300" cy="925.600" r="3.100" fill="#151515"/>
</g>
<g id="duck2" transform="translate(110 3)">
  <path d="M484 968c10 3 32 3 44 0c3 4 1 9-4 12c-2 6-7 12-14 16c-6 2-11-2-13-7c-7-2-13-7-15-13c-1-3 0-6 2-8z" fill="#1892c6" opacity=".75"/>
  <g fill="none" stroke="#eaf9fd" stroke-linecap="round">
    <path d="M474 958.500c-2 2.500-2 5 0 7.500c2.500 3 6 5.500 10 7.500c3 1.500 6 2.500 9.500 3.500" stroke-width="5"/>
    <path d="M540.500 965c3 1.200 4.200 2.600 3.800 4c-.8 2-3.500 3.600-7.700 4.800c-4.500 1.200-10.500 1.800-17.200 1.900" stroke-width="4"/>
    <path d="M548 963.200c4 1.500 6 3.500 5.900 5.800c-.3 3-3 5.600-7.700 7.600c-5 2-11.500 3.200-19.200 3.900c-9 .7-18.500 .2-28.700-1" stroke-width="3.400"/>
    <path d="M562.500 975.700c-4.500 3.300-11 5.900-19.200 7.600" stroke-width="2.600"/>
    <path d="M556.700 963.200c1.800 .7 3.300 1.700 4.300 2.800" stroke-width="3"/>
    <path d="M565.800 971.400c1.300 1.200 2.100 2.700 2.400 4.300" stroke-width="3.800"/>
    <path d="M462 958.400c2.500-2.300 5.700-4.200 9.500-5.700" stroke-width="2.600"/>
    <path d="M464.300 976.600l6.200 1.400M485.400 983.800l8.100 1M515.600 985.200h5.700" stroke-width="2.800"/>
  </g>
  <path d="M478.700 953.600c1.500-4.500 4-8.500 7.500-12c1.500-1.500 2-3 1.500-5c-1-4-1.500-9-1.200-14.500c.5-7 6-12 15-12.100c9 0 15.500 5 16.500 12c.3 9-.2 17.500-.4 26c3 1.500 7 2.300 10.500 2.500c2.500-.3 4.500-.2 5.700-.2c1.800 .3 3.500 1.500 5.200 3.300c-1 4.500-3.300 8.200-6.200 11.400c-3 1.500-6 2.200-9.500 2.700c-8 .8-17 .8-25.500-.2c-6-.8-11-2.200-13.800-4c-3-2.500-5-6-5.300-9.900z" fill="#f7aa4c"/>
  <path d="M486.200 941.600c6 5 13 7.500 21 7.800c4 0 7.500-.5 10.400-1.400l-1 19c-8 .8-17 .8-25.500-.2c-5-1-8-2-10-3.500c-2-3-3-6-3.200-9.700c1.500-4.500 4-8.500 7.500-12z" fill="#f29d3d" opacity=".5"/>
  <path d="M480 930.300l11.600-2.100l3.200 6l-12.600 .2z M483.500 937.900l10-4l2 3.600l-8.700 2z" fill="#f08226"/>
  <circle cx="503.100" cy="925.400" r="5.200" fill="#fff"/><circle cx="503.300" cy="925.600" r="3.100" fill="#151515"/>
</g>
<g id="hen">
  <path d="M847.500 941l-1.500-13M853.500 941l2.500-11" stroke="#c4a9a0" stroke-width="2.800" stroke-linecap="round" fill="none"/>
  <path d="M834.500 996v17h-7.500M851.500 993v20h-7.500" stroke="#4b5563" stroke-width="3.400" fill="none" stroke-linejoin="miter"/>
  <path d="M824 962c2-10 6-17 12-21c6-2 20-2 28-1c6 1 10 4 12 10c2 10 2 24-1 34c-3 8-10 12-19 14c-6 2-14 3-20 2c-6-10-12-24-12-38z" fill="#d8cebd"/>
  <path d="M857 953c4-5 12-7 17-3c3 8 4 24 0 33c-4 6-10 8-18 6c-3-8-3-26 1-36z" fill="#a99886"/>
  <path d="M806 968l10-9l18-2l14 6l7 12l-1 14l-8 9l-14 3l-12-4l-12-12l-3-10z" fill="#eee9e0"/>
  <path d="M834 957l14 6l7 12l-1 14l-8 9c-2-14-6-28-12-41z" fill="#e2dacd" opacity=".75"/>
  <path d="M813 960c-2-1-4 0-5 2c-1 1-1 3 0 4c-2 0-4 2-4 4c0 2 1 4 3 4c-1 2 0 4 2 5l3-1c1-6 2-12 1-18z" fill="#e8566b"/>
  <path d="M813.500 988l2.500 7.500l3-6.500z" fill="#f3c242"/><path d="M819.500 990l1.500 5l2.500-4z" fill="#e8566b"/>
  <circle cx="828.800" cy="977.700" r="6.500" fill="#fff"/><circle cx="828.600" cy="977.700" r="4.400" fill="#22242c"/>
</g>
<g id="stump">
  <ellipse cx="1052" cy="1014" rx="54" ry="13" fill="#a4d23c" opacity=".45"/>
  <path d="M1008 1009c6-6 20-8 44-8c26 0 40 2 46 7c-2 5-10 7-18 8c-4 4-12 6-22 4c-8 3-20 3-28-1c-8 1-18-2-22-10z" fill="#4cb83a"/>
  <path d="M1034 977c.5 5 1 10 1.500 14.500c-3 7-10 12-26 16.500c2 2.500 4 3 6.500 2.500c5-1 9-2 12-3.500c-2 4-1 7 2 10c5-.5 9-2.500 13-6c3-2 6-2.500 8.500-.5c4 3 10 5 16 5.500c3-1 5-3 5.500-6c4 2.500 8 4 12 4c3-1 6-3.500 9-7.500c-8-3.500-13-9-16-15.500c.5-5 1.500-10 1.500-14.500z" fill="#b5703a"/>
  <path d="M1043 985c0 9-2 17-9 24M1063 986c1 9 4 17 9 22M1053 991c-.5 6 0 11 1 16" stroke="#8f5226" stroke-width="2" fill="none" stroke-linecap="round"/>
  <path d="M1036 981c1 8 0 14-6 20" stroke="#c98a52" stroke-width="2" fill="none" stroke-linecap="round" opacity=".7"/>
  <ellipse cx="1057" cy="975.600" rx="23.300" ry="6.500" fill="#d6a067"/>
  <ellipse cx="1057" cy="975" rx="19.500" ry="4.600" fill="#a5632f"/>
</g>
<g id="rooster">
  <g stroke="#5d7389" stroke-width="6.200" stroke-linecap="round" stroke-linejoin="round" fill="none"><path d="M1095 935l3.700-11.500l17.300-10.300"/><path d="M1101 938l2.500-8.200l18-6.300"/><path d="M1101 945.500l4.800-6.300l19.800-.7"/></g>
  <path d="M1047 888.700c-2-4-1.500-8 .5-11l3 1.500l2-4l4 2l3.500-3.200l4 3.200l4.500-1.500c1.500 4 1 8-1 12.500z" fill="#e8566b"/>
  <path d="M1039.500 903c0-10 7-17.500 17-17.800c9-.2 15.500 6 16.200 15.800c.5 6 1.500 11 3.100 16c5 5 12 10 19 16c5 5 8 11 7.900 17c-.5 6-3.500 11-7.900 14.500c-7 4.500-15 7.500-25.300 7.900c-10 .3-20-1.500-28.500-6.400c-6-4-9-11-10.200-19c-1-7-1.500-13-2.400-19c.3-5 2.500-9 5.600-13c2.500-3 4.500-7 5.500-12z" fill="#f19380"/>
  <path d="M1039.500 903c0-10 7-17.500 17-17.800c9-.2 15.500 6 16.200 15.800c.3 5 .8 10 1.300 14.500c-15 2-31 6-45.600 12c.3-5 2.500-9 5.600-13c2.500-3 4.500-7 5.500-11.500z" fill="#f5cba4"/>
  <path d="M1039.500 902l-7.900 8.800l3.200 4l3.100-2.400z" fill="#e8566b"/>
  <path d="M1034.800 897.400l7.800-1.600v4z" fill="#f3c242"/>
  <circle cx="1059.200" cy="897.900" r="7" fill="#fff"/><circle cx="1059.400" cy="898.100" r="4.700" fill="#22242c"/>
  <path d="M1062 936c4-3.500 12-4.500 22-3.800c7 .5 13 1.500 17 3.300c1 7 .5 14-1.500 19.500c-3 4-9 6-17 6c-8 0-15-2-20-5.500c-3-5-3.500-13-.5-19.500z" fill="#5d7389"/>
  <path d="M1040 968c3-1.500 6-.5 8.500 1.500c3.500 1 6.500 0 9-1.500c4-2 8-2.500 12-1.500l-.5 4.500c-4 1-7 2.500-10 4c-4 1-8 .5-11.500-1c-3 0-6-1-8.500-2.500z" fill="#f3c431"/>
</g>
<g id="chick">
  <path d="M1307.600 1000.300l17.200 2.400M1285.600 1014l3.800 11.700l3.800-.9" stroke="#e8643a" stroke-width="3.600" stroke-linecap="round" stroke-linejoin="round" fill="none"/>
  <path d="M1304.200 974.500l12-12.900l2.800 3.300l5.300-1.400l2 8.100l-6.300 11.400l-6.700 5.400l-3.800-2.400z" fill="#f0c04a"/>
  <path d="M1265.400 993.600l-19.100 5.800l-1 5.600l3.900 4l13.400 0l5.700-4z" fill="#f0c04a"/>
  <path d="M1276.900 951c1.500 0 2.500 1.500 2.900 4.300l9.600 1l13.400 15.300l8.600 24l-4.800 10.400l-11.500 9.700l-15.300 0l-12.400-12.500l-3.900-17.200l2.400-20.100l7.700-8.200c.5-3.500 1.500-6.700 3.300-6.700z" fill="#f6de7a"/>
  <path d="M1289.400 956.300l13.400 15.300l8.600 24l-4.800 10.400l-11.500 9.700l-8 0c8-8 12-20 11-34c-.5-9-4-18-8.700-25.400z" fill="#eed267" opacity=".75"/>
  <path d="M1270.200 979.300l7.700 6.700M1273 990.800l6.800 2.800" stroke="#e6c660" stroke-width="3" fill="none"/>
</g>
<g id="lilac">
  <path d="M1453 1010l-1.300 8.300l-5 2M1431 997.800l-5.500-1.300" stroke="#f5a623" stroke-width="3" stroke-linecap="round" fill="none" stroke-linejoin="round"/>
  <path d="M1431.800 956.700l-7.500 3c0 7 2 13 4.500 19z" fill="#9a9acc"/>
  <path d="M1478.500 978l6.200-4M1480 986.500l5.300-1.800" stroke="#d6d2ea" stroke-width="3" stroke-linecap="round" fill="none"/>
  <path d="M1451 951.500v-5M1454.800 951.500v-5" stroke="#cdd6ee" stroke-width="2" stroke-linecap="round" fill="none"/>
  <path d="M1442 952c6-3 16-3 23 1c8 5 13 14 14.500 24c1 10 0 20-5 27c-6 6-16 8-25 6.500c-8-2-14-8-17-16c-3-9-3-20-1-28c2-7 6-12 10.500-14.500z" fill="#e7e1f5"/>
  <path d="M1456.700 988.400l11.800 1.300l7.500 8.700l-5 6.200l-11.200-5z" fill="#9a9acc"/>
  <ellipse cx="1436" cy="965" rx="3" ry="2" fill="#f5c23e"/>
  <circle cx="1455.800" cy="968.500" r="5.800" fill="#f4f2fb"/><circle cx="1455.800" cy="968.500" r="4.800" fill="#27304e"/>
</g>
<g id="log">
  <ellipse cx="1553" cy="952.500" rx="39" ry="7.500" fill="#8cc63a" opacity=".75"/>
  <ellipse cx="1551" cy="951.500" rx="30" ry="4.500" fill="#52b93a"/>
  <path d="M1557 929c3-7 7-13 12.500-19l3.500 2.500c-4 5-6 11-7 18z" fill="#a5551f"/>
  <path d="M1525.800 926c16 0 34 2 50.500 4.500v21.500c-17 0-35-1.500-51-4c-3.500-6-3.500-16 .5-22z" fill="#9c4f1f"/>
  <path d="M1525.800 926c16 0 34 2 50.500 4.500v4c-16-2.500-34-4-51.500-4.500z" fill="#b5652a" opacity=".8"/>
  <path d="M1530 936c14 .5 28 2 42 4M1530 943.500c12 1.500 26 3 40 4" stroke="#7f3c14" stroke-width="1.500" fill="none"/>
  <ellipse cx="1576.700" cy="941.200" rx="4.800" ry="11.300" fill="#e8883a"/><ellipse cx="1577.200" cy="941.200" rx="2.900" ry="8.800" fill="#8a4a20"/>
</g>
<g id="pigeon">
  <path d="M1650.500 1005l2 19l-8 3M1661.500 1003l14.500 15l-7 5" stroke="#e8862e" stroke-width="3.800" stroke-linecap="round" stroke-linejoin="round" fill="none"/>
  <path d="M1693 993c2 0 4-1 5-3" stroke="#e8566b" stroke-width="2.200" fill="none"/>
  <path d="M1697 985l6.500 12l3-1.500l2 1.500l3-3l3 1l2-4l3-1l-.5-4.500l3-3.500c-5-7-12-13-19-18z" fill="#b9bdcc"/>
  <path d="M1610 901l7.500 16c-5 10-10 20-13 31c-3 9-6 18-6.500 26c0 7 1 12 3 16.500c4 4 9 7.500 15 9.500c12 4 25 5.500 37 5c9-1 17-3 24.500-6c8-3 14-6 19.500-10l12-23c-6-4-13-8-20-11c-6-2-13-4-19.500-5c-8-1.500-15-3-22.500-5c1-10 2-20 2.500-30c.5-6 1-12 .5-17.500l-6-12z" fill="#a6adb7"/>
  <path d="M1610 901l7.500 16c-5 10-10 20-13 31c-3 9-6 18-6.500 26c0 7 1 12 3 16.500c2-22 10-50 26-76z" fill="#bcc2ca" opacity=".6"/>
  <path d="M1601 990.500c4 4 9 7.500 15 9.500c12 4 25 5.500 37 5c9-1 17-3 24.500-6c8-3 14-6 19.500-10c-30 8-66 10-96 1.500z" fill="#b6bbc4" opacity=".7"/>
  <path d="M1670.500 949c-10 4-22 10-30 18c-6 5-10 10-10 14c1 2 3 2 6 1.500c8-3 16-9 22-15c6-6 10-13 12-18.500z" fill="#40454c"/>
  <path d="M1602 886l5-5.500l10-2.500l12 0l14.500 4l1.500 12.500l-8 9l-14 6.500l-13-9l-6-7z" fill="#40444b"/>
  <path d="M1595.500 899.500c0-2 1.500-3 3-3.500l10.500-2.500l.5 7l-12 1.500c-1.500 0-2-1-2-2.500z" fill="#e8862e"/>
  <circle cx="1624.300" cy="891.200" r="8" fill="#f4f4f4"/><circle cx="1624.300" cy="891.200" r="5.500" fill="#383b42"/>
</g>
<g id="crow">
  <path d="M1214.500 825v8.500M1217 825.500v6" stroke="#f1c232" stroke-width="1.800" fill="none"/>
  <path d="M1192.500 824.500l8-10l4 6z" fill="#353b42"/>
  <path d="M1198 817c3-6 10-9 18-10c1-6 3-11 5-15l1-3l1.500 3l2.500-2c3 3 4 8 4 13c1 8 0 16-4 21c-6 4-14 5-22 3c-5-2-8-6-6-10z" fill="#434a52"/>
  <path d="M1204 816c6-3 14-3 20 0c0 5-4 8-10 9c-5 0-9-3-10-9z" fill="#565d66"/>
  <path d="M1227.500 795l10 5.500l-8.500 4z" fill="#c9cfd5"/>
  <circle cx="1222" cy="798.500" r="3.400" fill="#fff"/><circle cx="1222" cy="798.500" r="1.900" fill="#30353b"/>
</g>
<g id="sparrow">
  <path d="M1266.500 834v5.500M1273.500 834v5.500" stroke="#2c2a2a" stroke-width="2" fill="none"/>
  <path d="M1259 816c-1-8 3-15 10-16c6 0 9 4 9 9l4 6c2 6 2 12-2 17c-5 3-13 3-18 0c-3-4-4-10-3-16z" fill="#8f837b"/>
  <path d="M1259 816c-1-8 3-15 10-16c3 0 6 1 7 3c-5 4-8 10-9 16c-3 0-6-1-8-3z" fill="#5a4032"/>
  <path d="M1269 808c2-4 6-5 9-2l1 5c-3 3-7 3-10 2z" fill="#ddd5cc"/>
  <circle cx="1273" cy="807" r="1.300" fill="#222"/>
  <circle cx="1279" cy="821.500" r="6" fill="#5a4032"/>
</g>
<g id="woodpecker">
  <path d="M1254.500 772v7M1258 773v6" stroke="#6a7a8c" stroke-width="1.800" fill="none"/>
  <path d="M1240 741l7-7l4 2l4-2l4 4l-6 5z" fill="#d8434f"/>
  <path d="M1233.500 745.500l7-2.500v4z" fill="#ef9a3c"/>
  <path d="M1240 744c2-4 7-5 12-4c4 1 6 5 6 10l-2 5c-5 1-11 0-15-2c-1-3-2-6-1-9z" fill="#d2cbdb"/>
  <circle cx="1249.500" cy="743.800" r="1.800" fill="#22242c"/>
  <path d="M1242 753c5 2 10 2 15 0c6 5 10 11 13 18l12 4l-2 3c-6 0-12-1-17-4c-8-2-14-6-18-12c-2-3-3-6-3-9z" fill="#4a525c"/>
</g>
<g id="eagle">
  <defs><linearGradient id="gE" x1="0" y1="0" x2=".3" y2="1"><stop offset="0" stop-color="#7a7163"/><stop offset="1" stop-color="#625a4e"/></linearGradient></defs>
  <path d="M811.500 668.500l-14-5.500l-12 6l24.500 7zM810 679l-29 7.500l6 7l23.500-5.500z" fill="#ccd9e1"/>
  <path d="M836 712l-1 7 4 1z" fill="#f1c232"/>
  <path d="M813 670l21.500-4l23-7l32 12l2.500 40l-8.500 4.500l-6-4.500l-9.500 1.500l-4.500 15l-3 .5l-2-3l-3 7l-4.500-1l-2-5l-3 5l-5-3l-4.500-20l-20-12l-5.500-14z" fill="url(#gE)"/>
  <path d="M868 712.500l9.500-1.500l6 4.500l8.500-4.500l-1.500-24c-6 10-14 20-22.500 25.500z" fill="#5d5549" opacity=".8"/>
  <path d="M868 635.500l-4-3l1-2l5 2l1-3l5 1l16.500 7l3 8l-6 24.500l-11 6l-23-9.500l6-13.500z" fill="#c5d3dd"/>
  <path d="M890.500 650.500l4.500-2.500l5.500 6.500l-1 6l-4-4.500z" fill="#f0a030"/>
  <circle cx="878.500" cy="650.500" r="6" fill="#fff"/><circle cx="878.500" cy="650.700" r="4.300" fill="#2a2830"/>
</g>
<g id="pinkbird">
  <path d="M936.500 701l10-4.500l1.500 7z" fill="#d6bcd0"/>
  <path d="M948 703.500l17 0l10.500 27.500l-9.500 6l-15-1.300l-12.500-10.700l1-11z" fill="#c2a6b8"/>
  <path d="M981.500 683.500l-2 4l-4-1.300l0 3.500l-10.500 18.300l9 23l7.500 3l9.500-26l6-6l-6-11l-8-2.500z" fill="#dcc6d8"/>
  <path d="M990.800 708l6-6l-3.500-6c0 4-1 8-2.500 12z" fill="#e8a8c4"/>
  <path d="M955.500 726.500l9 0l-3 18.500l-9 0l-4.500-6z" fill="#dcc4da"/>
  <path d="M955 745l5 1.500" stroke="#f1c232" stroke-width="1.600"/>
  <path d="M974 700.500c2-1.200 5-1.200 7 0" stroke="#222" stroke-width="1.600" fill="none"/>
  <rect x="976" y="702" width="3.300" height="7.500" fill="#4aa8e0"/>
</g>
</svg>
</div>
</body>
</html>
